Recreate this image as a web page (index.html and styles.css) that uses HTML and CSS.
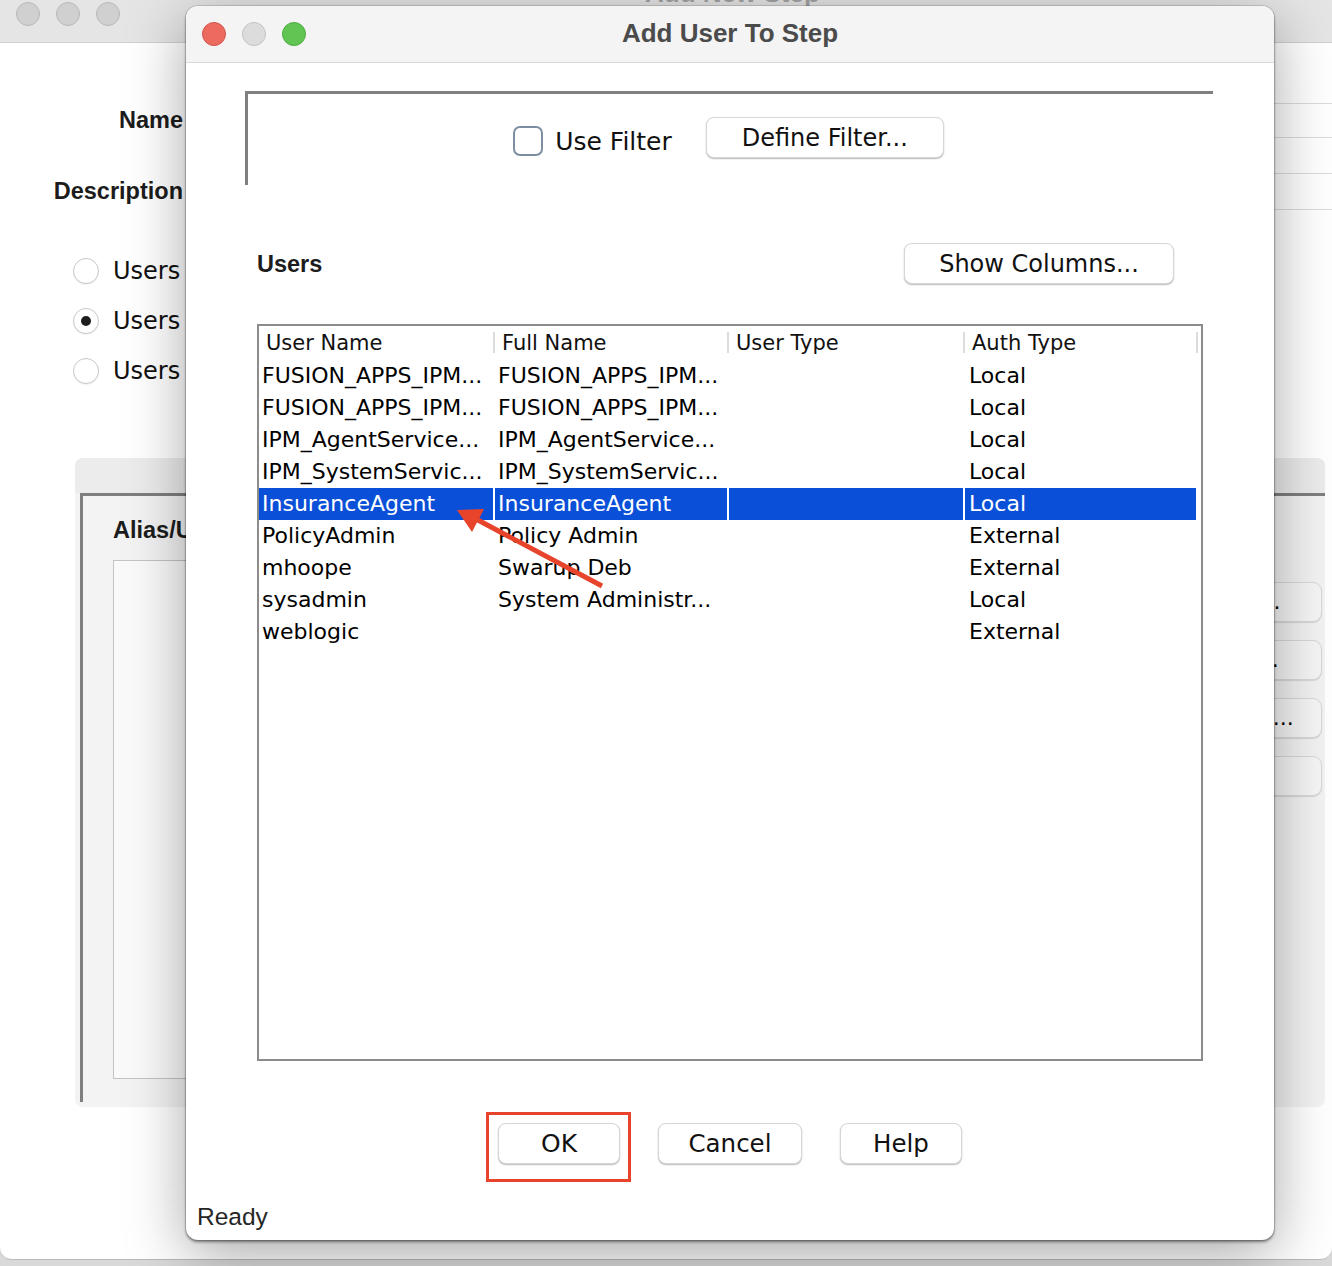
FILE: index.html
```html
<!DOCTYPE html>
<html>
<head>
<meta charset="utf-8">
<title>Add User To Step</title>
<link rel="stylesheet" href="styles.css">
</head>
<body>
<div class="desktop">
  <div class="bgwin">
    <div class="bg-titlebar">
      <div class="lights">
        <span class="light idle"></span>
        <span class="light idle"></span>
        <span class="light idle"></span>
      </div>
      <div class="bg-title">Add New Step</div>
    </div>
    <div class="bg-content">
      <div class="form">
        <div class="flabel">Name</div>
        <div class="field name"></div>
        <div class="flabel">Description</div>
        <div class="field desc"></div>
      </div>
      <div class="radios">
        <div class="radio-row"><span class="radio"></span>Users</div>
        <div class="radio-row"><span class="radio on"></span>Users</div>
        <div class="radio-row"><span class="radio"></span>Users</div>
      </div>
      <div class="tabpanel">
        <div class="tabstrip"></div>
        <div class="tabbody">
          <div class="alias-col">
            <div class="alias-label">Alias/User</div>
            <div class="alias-list"></div>
          </div>
          <div class="side-buttons">
            <div class="side-btn">New...</div>
            <div class="side-btn">Add...</div>
            <div class="side-btn">Delete...</div>
            <div class="side-btn faded">Remove</div>
          </div>
        </div>
      </div>
    </div>
  </div>

  <div class="dialog">
    <div class="dlg-titlebar">
      <div class="lights">
        <span class="light red"></span>
        <span class="light min"></span>
        <span class="light green"></span>
      </div>
      <div class="dlg-title">Add User To Step</div>
      <div></div>
    </div>
    <div class="dlg-body">
      <div class="filter-panel">
        <label class="check"><span class="checkbox"></span>Use Filter</label>
        <button class="btn w-define">Define Filter...</button>
      </div>
      <div class="users-row">
        <div class="users-label">Users</div>
        <button class="btn w-show">Show Columns...</button>
      </div>
      <div class="table">
        <div class="trow thead">
          <div class="th">User Name</div>
          <div class="th">Full Name</div>
          <div class="th">User Type</div>
          <div class="th">Auth Type</div>
        </div>
        <div class="trow"><div class="td">FUSION_APPS_IPM...</div><div class="td">FUSION_APPS_IPM...</div><div class="td"></div><div class="td c4">Local</div></div>
        <div class="trow"><div class="td">FUSION_APPS_IPM...</div><div class="td">FUSION_APPS_IPM...</div><div class="td"></div><div class="td c4">Local</div></div>
        <div class="trow"><div class="td">IPM_AgentService...</div><div class="td">IPM_AgentService...</div><div class="td"></div><div class="td c4">Local</div></div>
        <div class="trow"><div class="td">IPM_SystemServic...</div><div class="td">IPM_SystemServic...</div><div class="td"></div><div class="td c4">Local</div></div>
        <div class="trow selected"><div class="td">InsuranceAgent</div><div class="td">InsuranceAgent</div><div class="td"></div><div class="td c4">Local</div></div>
        <div class="trow"><div class="td">PolicyAdmin</div><div class="td">Policy Admin</div><div class="td"></div><div class="td c4">External</div></div>
        <div class="trow"><div class="td">mhoope</div><div class="td">Swarup Deb</div><div class="td"></div><div class="td c4">External</div></div>
        <div class="trow"><div class="td">sysadmin</div><div class="td">System Administr...</div><div class="td"></div><div class="td c4">Local</div></div>
        <div class="trow"><div class="td">weblogic</div><div class="td"></div><div class="td"></div><div class="td c4">External</div></div>
      </div>
      <div class="actions">
        <button class="btn w-ok">OK</button>
        <button class="btn w-cancel">Cancel</button>
        <button class="btn w-help">Help</button>
      </div>
      <div class="status">Ready</div>
    </div>
    <svg class="annot" width="1088" height="1234" viewBox="0 0 1088 1234">
      <rect x="301.5" y="1107.5" width="142" height="67" fill="none" stroke="#e8432b" stroke-width="3"/>
      <line x1="416" y1="580" x2="290" y2="513" stroke="#e8432b" stroke-width="5"/>
      <polygon points="271,504 298,503 286,526" fill="#e8432b"/>
    </svg>
  </div>
</div>
</body>
</html>
```
FILE: styles.css
```css
* { box-sizing: border-box; }
html, body { margin: 0; padding: 0; }
body {
  width: 1332px;
  height: 1266px;
  background: #d9d9d9;
  overflow: hidden;
  font-family: "DejaVu Sans", sans-serif;
  color: #000;
}
.desktop { position: relative; width: 1332px; height: 1266px; }

/* ---------- background window ---------- */
.bgwin {
  width: 1332px;
  height: 1260px;
  background: #fff;
  border-radius: 0 0 12px 12px;
  border-bottom: 1px solid #b9b9b9;
  overflow: hidden;
}
.bg-titlebar {
  height: 43px;
  background: #e5e5e5;
  border-bottom: 1px solid #d0d0d0;
  display: flex;
  align-items: flex-start;
  padding: 2px 0 0 16px;
  overflow: hidden;
}
.lights { display: flex; gap: 16px; }
.light {
  width: 24px; height: 24px; border-radius: 50%;
  display: block;
}
.light.idle { background: #d0d0d0; border: 1px solid #b9b9b9; }
.light.red { background: #ec6a5f; border: 1px solid #d3544a; }
.light.min { background: #dcdcdc; border: 1px solid #c3c3c3; }
.light.green { background: #61c554; border: 1px solid #4fab42; }
.bg-title {
  margin: -24px 0 0 525px;
  font: bold 26px/30px "Liberation Sans", sans-serif;
  color: #a3a3a3;
}

.bg-content { padding-top: 60px; }
.form {
  display: grid;
  grid-template-columns: 183px 1fr;
  column-gap: 14px;
  row-gap: 35px;
}
.flabel {
  font: bold 23.5px "Liberation Sans", sans-serif;
  color: #1c1c1c;
  text-align: right;
  align-self: center;
}
.field { border: 1px solid #dcdcdc; border-right: none; background: #fff; }
.field.name { height: 35px; }
.field.desc { height: 37px; }

.radios {
  margin-top: 36px;
  padding-left: 73px;
  display: flex;
  flex-direction: column;
}
.radio-row {
  height: 50px;
  display: flex;
  align-items: center;
  gap: 14px;
  font-size: 24px;
  color: #111;
}
.radio {
  width: 26px; height: 26px;
  border-radius: 50%;
  border: 1px solid #c9c9c9;
  background: #fff;
  box-shadow: 0 1px 1px rgba(0,0,0,0.06);
  display: flex; align-items: center; justify-content: center;
}
.radio.on::after {
  content: "";
  width: 10px; height: 10px; border-radius: 50%;
  background: #1e1e1e;
}

.tabpanel {
  margin: 62px 7px 0 75px;
  height: 649px;
  background: #f3f3f3;
  border-radius: 8px;
  display: flex;
  flex-direction: column;
}
.tabstrip { height: 35px; background: #ececec; border-radius: 8px 8px 0 0; }
.tabbody {
  flex: 1;
  margin: 0 0 5px 5px;
  border-top: 3px solid #7f7f7f;
  border-left: 3px solid #7f7f7f;
  display: flex;
  padding: 21px 3px 0 30px;
}
.alias-col { flex: 1; }
.alias-label {
  font: bold 23.5px/26px "Liberation Sans", sans-serif;
  color: #1c1c1c;
}
.alias-list {
  margin-top: 17px;
  height: 519px;
  border: 1px solid #c4c4c4;
  background: #fafafa;
}
.side-buttons {
  width: 150px;
  margin-left: 20px;
  padding-top: 65px;
  display: flex;
  flex-direction: column;
  gap: 18px;
}
.side-btn {
  height: 40px;
  border: 1px solid #d8d8d8;
  border-radius: 9px;
  background: #f6f6f6;
  box-shadow: 0 1px 1px rgba(0,0,0,0.12);
  font-size: 22px;
  line-height: 38px;
  text-align: center;
  color: #000;
}
.side-btn.faded { color: #f6f6f6; }

/* ---------- dialog ---------- */
.dialog {
  position: absolute;
  left: 186px;
  top: 6px;
  width: 1088px;
  height: 1234px;
  background: #fff;
  border-radius: 12px;
  box-shadow: 0 2px 3px rgba(0,0,0,0.45), 0 0 0 1px rgba(0,0,0,0.12), 0 14px 60px rgba(0,0,0,0.35);
  overflow: hidden;
}
.dlg-titlebar {
  height: 57px;
  background: #f3f4f3;
  border-bottom: 1px solid #dadada;
  display: grid;
  grid-template-columns: 1fr auto 1fr;
  align-items: center;
  padding-left: 16px;
}
.dlg-title {
  font: bold 26px "Liberation Sans", sans-serif;
  color: #4b4b4b;
  padding-right: 16px;
  margin-top: -2px;
}
.dlg-body {
  display: flex;
  flex-direction: column;
  padding-top: 28px;
}
.filter-panel {
  margin-left: 59px;
  width: 968px;
  height: 94px;
  border-top: 3px solid #808080;
  border-left: 3px solid #808080;
  display: flex;
  align-items: center;
  justify-content: center;
  gap: 34px;
  padding-right: 4px;
}
.check {
  display: flex;
  align-items: center;
  gap: 12px;
  font-size: 25px;
  color: #111;
  padding-top: 3px;
}
.checkbox {
  width: 30px; height: 30px;
  border: 2.5px solid #7d8da2;
  border-radius: 7px;
  background: #fff;
}
.btn {
  height: 41px;
  padding: 0;
  background: #fff;
  border: 1px solid #d6d6d6;
  border-radius: 8px;
  box-shadow: 0 1px 1.5px rgba(0,0,0,0.28);
  font-family: "DejaVu Sans", sans-serif;
  font-size: 24px;
  color: #111;
}
.w-define { width: 238px; margin-top: -4px; }
.w-show { width: 270px; }
.w-ok { width: 122px; font-size: 25px; }
.w-cancel { width: 144px; font-size: 24.5px; }
.w-help { width: 122px; font-size: 24.5px; }

.users-row {
  margin: 58px 100px 0 71px;
  height: 41px;
  display: flex;
  align-items: center;
  justify-content: space-between;
}
.users-label {
  font: bold 23.5px "Liberation Sans", sans-serif;
  color: #1c1c1c;
  padding-top: 2px;
}

.table {
  margin: 40px 0 0 71px;
  width: 946px;
  height: 737px;
  border: 2px solid #8c8c8c;
  background: #fff;
}
.trow {
  display: grid;
  grid-template-columns: 236px 234px 236px 233px;
  height: 32px;
  font-size: 22px;
  line-height: 32px;
  white-space: nowrap;
}
.thead { height: 34px; line-height: 34px; font-size: 21px; }
.th { position: relative; padding-left: 7px; color: #111; }
.th::after {
  content: "";
  position: absolute;
  right: 0; top: 6px; bottom: 7px;
  width: 2px;
  background: #dcdcdc;
}
.td { padding-left: 3px; overflow: hidden; }
.td.c4 { padding-left: 4px; }
.selected .td {
  background: #0a4fd8;
  color: #fff;
  box-shadow: inset -2px 0 0 #fff;
}

.actions {
  margin-top: 62px;
  display: flex;
  justify-content: center;
  gap: 38px;
}
.status {
  margin: 39px 0 0 11px;
  font: 24.5px/28px "Liberation Sans", sans-serif;
  color: #262626;
}
.annot {
  position: absolute;
  left: 0; top: 0;
  pointer-events: none;
}
```
